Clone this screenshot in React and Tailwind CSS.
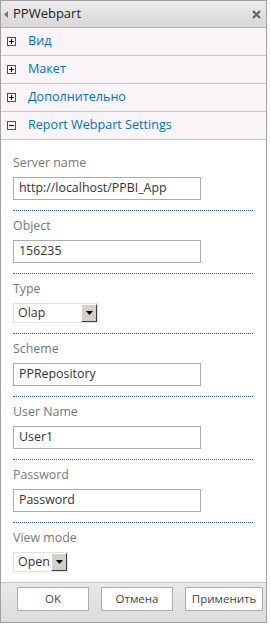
const SECTIONS = ['Вид', 'Макет', 'Дополнительно'];

function PlusBox({ open }) {
  return (
    <span className="relative flex h-[9px] w-[9px] shrink-0 items-center justify-center border border-[#4d4d4d] bg-white">
      <span className="absolute h-px w-[5px] bg-black" />
      {!open && <span className="absolute h-[5px] w-px bg-black" />}
    </span>
  );
}

function SectionRow({ title, open }) {
  return (
    <div className="flex h-[28px] items-center border-b border-[#c6c6c6] bg-[#f8f4f8] pl-[6px]">
      <PlusBox open={open} />
      <span className="ml-[12px] text-[12.6px] text-[#0072c6]">{title}</span>
    </div>
  );
}

function Dots() {
  return <div className="mt-[10px] w-[240px] border-t border-dotted border-[#3d5fbf]" />;
}

function TextField({ label, value }) {
  return (
    <div className="mt-[6px] first:mt-0">
      <div className="h-[18px] text-[12.4px] leading-[18px] text-[#777]">{label}</div>
      <div className="mt-[5px] flex h-[23px] w-[188px] items-center border border-[#ababab] bg-white px-[5px] text-[12.4px] text-[#333]">
        {value}
      </div>
      <Dots />
    </div>
  );
}

function SelectBox({ value, width }) {
  return (
    <div className={`flex h-[20px] items-stretch border border-[#e0e0e0] bg-white ${width}`}>
      <span className="flex flex-1 items-center pl-[4px] text-[12.4px] text-[#333]">{value}</span>
      <span className="flex w-[16px] items-center justify-center border border-t-white border-l-white border-r-[#404040] border-b-[#404040] bg-[#d4d0c8]">
        <svg width="7" height="4" viewBox="0 0 7 4">
          <path d="M0 0H7L3.5 4Z" fill="#000" />
        </svg>
      </span>
    </div>
  );
}

function Button({ children, width }) {
  return (
    <button className={`h-[24px] border border-[#adadad] bg-white text-[11.5px] text-[#444] ${width}`}>
      {children}
    </button>
  );
}

export default function App() {
  return (
    <div
      className="flex h-[623px] w-[267px] flex-col border border-[#a0a0a0] bg-white"
      style={{ fontFamily: '"Open Sans", "Noto Sans", sans-serif' }}
    >
      {/* Header */}
      <div className="flex h-[27px] items-center justify-between border-b border-[#b4b4b4] bg-gradient-to-b from-[#ececec] to-[#d8d8d8] pl-[3px] pr-[5px]">
        <div className="flex items-center gap-[5px]">
          <svg width="4" height="7" viewBox="0 0 4 7">
            <path d="M4 0V7L0 3.5Z" fill="#777" />
          </svg>
          <span className="text-[13px] text-[#222]">PPWebpart</span>
        </div>
        <svg width="9" height="9" viewBox="0 0 9 9">
          <path d="M1 1L8 8M8 1L1 8" stroke="#666" strokeWidth="2.2" />
        </svg>
      </div>

      {SECTIONS.map((s) => (
        <SectionRow key={s} title={s} />
      ))}
      <SectionRow title="Report Webpart Settings" open />

      {/* Settings */}
      <div className="flex-1 pl-[12px] pt-[14px]">
        <TextField label="Server name" value="http://localhost/PPBI_App" />
        <TextField label="Object" value="156235" />

        <div className="mt-[6px]">
          <div className="h-[18px] text-[12.4px] leading-[18px] text-[#777]">Type</div>
          <div className="mt-[5px]">
            <SelectBox value="Olap" width="w-[85px]" />
          </div>
          <Dots />
        </div>

        <TextField label="Scheme" value="PPRepository" />
        <TextField label="User Name" value="User1" />
        <TextField label="Password" value="Password" />

        <div className="mt-[6px]">
          <div className="h-[18px] text-[12.4px] leading-[18px] text-[#777]">View mode</div>
          <div className="mt-[5px]">
            <SelectBox value="Open" width="w-[55px]" />
          </div>
        </div>
      </div>

      {/* Footer */}
      <div className="flex h-[40px] items-start gap-[12px] border-t border-[#c6c6c6] bg-gradient-to-b from-[#e8e8e8] to-[#dcdcdc] pl-[16px] pt-[4px]">
        <Button width="w-[72px]">OK</Button>
        <Button width="w-[72px]">Отмена</Button>
        <Button width="w-[78px]">Применить</Button>
      </div>
    </div>
  );
}
